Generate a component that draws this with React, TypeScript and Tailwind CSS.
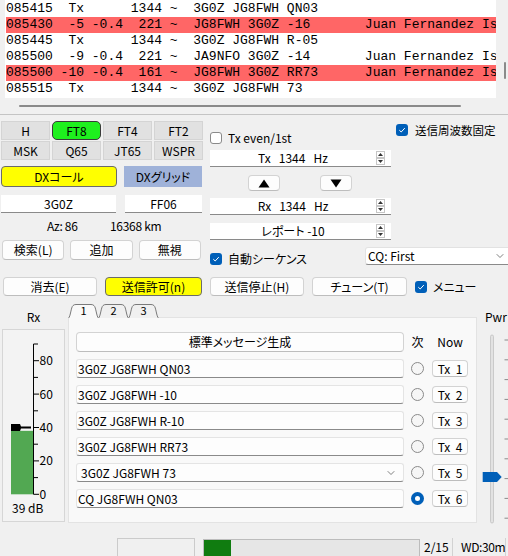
import type { ReactNode } from 'react'
import { ChevronDown } from 'lucide-react'

const decodes = [
  { text: '085415  Tx      1344 ~  3G0Z JG8FWH QN03', hit: false },
  { text: '085430  -5 -0.4  221 ~  JG8FWH 3G0Z -16       Juan Fernandez Is.', hit: true },
  { text: '085445  Tx      1344 ~  3G0Z JG8FWH R-05', hit: false },
  { text: '085500  -9 -0.4  221 ~  JA9NFO 3G0Z -14       Juan Fernandez Is.', hit: false },
  { text: '085500 -10 -0.4  161 ~  JG8FWH 3G0Z RR73      Juan Fernandez Is.', hit: true },
  { text: '085515  Tx      1344 ~  3G0Z JG8FWH 73', hit: false },
]

const modes = ['H', 'FT8', 'FT4', 'FT2', 'MSK', 'Q65', 'JT65', 'WSPR']

const txMsgs = [
  '3G0Z JG8FWH QN03',
  '3G0Z JG8FWH -10',
  '3G0Z JG8FWH R-10',
  '3G0Z JG8FWH RR73',
  '3G0Z JG8FWH 73',
  'CQ JG8FWH QN03',
]

function Btn({ children, className = '' }: { children: ReactNode; className?: string }) {
  return (
    <div
      className={`flex items-center justify-center rounded-[4px] border border-[#d3d3d3] border-b-[#bdbdbd] bg-[#fdfdfd] ${className}`}
    >
      {children}
    </div>
  )
}

function Check({ on }: { on?: boolean }) {
  if (on) {
    return (
      <span className="flex h-[12px] w-[12px] shrink-0 items-center justify-center rounded-[3px] bg-[#005fb8]">
        <svg width="8" height="8" viewBox="0 0 8 8">
          <path d="M1.3 4.2 L3.2 6 L6.8 2.1" stroke="#fff" strokeWidth="1" fill="none" />
        </svg>
      </span>
    )
  }
  return <span className="block h-[12px] w-[12px] shrink-0 rounded-[3px] border border-[#8a8a8a] bg-white" />
}

function Radio({ on }: { on?: boolean }) {
  if (on) {
    return (
      <span className="flex h-[13px] w-[13px] shrink-0 items-center justify-center rounded-full bg-[#005fb8]">
        <span className="block h-[5px] w-[5px] rounded-full bg-white" />
      </span>
    )
  }
  return <span className="block h-[13px] w-[13px] shrink-0 rounded-full border border-[#8a8a8a] bg-[#f6f6f6]" />
}

function SpinArrows() {
  return (
    <svg width="9" height="14" viewBox="0 0 9 14" className="shrink-0">
      <rect x="0.5" y="0.5" width="8" height="6" fill="#fff" stroke="#c6c6c6" />
      <rect x="0.5" y="7.5" width="8" height="6" fill="#fff" stroke="#c6c6c6" />
      <path d="M2 5 L4.5 2 L7 5Z" fill="#333" />
      <path d="M2 9 L4.5 12 L7 9Z" fill="#333" />
    </svg>
  )
}

function Spin({ children }: { children: ReactNode }) {
  return (
    <div className="flex h-[17px] w-[181px] items-center border-b border-[#8a8a8a] bg-white pr-[6px]">
      <div className="flex-1 whitespace-pre text-center">{children}</div>
      <SpinArrows />
    </div>
  )
}

// vertical signal meter, 0..90 dB
function RxMeter() {
  const y = (db: number) => 164.3 - db * 1.67
  const ticks = [0, 10, 20, 30, 40, 50, 60, 70, 80, 90]
  return (
    <svg width="61" height="191" className="block">
      <rect x={8} y={y(38)} width={22.3} height={y(0) - y(38)} fill="#52a852" />
      <path d={`M8 ${y(40) - 3.5} L17 ${y(40) - 3.5} L18 ${y(40) - 1} L28 ${y(40) - 1} L28 ${y(40) + 1} L18 ${y(40) + 1} L17 ${y(40) + 3.5} L8 ${y(40) + 3.5}Z`} fill="#000" />
      <line x1={30.5} y1={y(90)} x2={30.5} y2={y(0)} stroke="#000" strokeWidth="1" />
      {ticks.map((t) => (
        <line key={t} x1={30.5} y1={y(t)} x2={t % 20 === 0 ? 36 : 35} y2={y(t)} stroke="#000" strokeWidth="1" />
      ))}
      {[0, 20, 40, 60, 80].map((t) => (
        <text key={t} x={36.5} y={y(t) + 4.5} fontSize="12" fill="#000" fontFamily="Noto Sans CJK JP, sans-serif">
          {t}
        </text>
      ))}
      <text x={9} y={183} fontSize="12" fill="#000" fontFamily="Noto Sans CJK JP, sans-serif">
        39 dB
      </text>
    </svg>
  )
}

function PwrSlider() {
  const ticks = Array.from({ length: 10 }, (_, i) => 10 + i * 19.8)
  return (
    <svg width="31" height="200" className="block">
      <rect x={13.5} y={5} width={3} height={188} rx={1.5} fill="#e2e2e2" stroke="#c2c2c2" strokeWidth="0.8" />
      {ticks.map((t) => (
        <line key={t} x1={27.5} y1={t} x2={31} y2={t} stroke="#8a8a8a" strokeWidth="1" />
      ))}
      <path d="M5.7 142 L20 142 L24.7 147 L20 152 L5.7 152Z" fill="#005fb8" />
    </svg>
  )
}

function Tab({ label, active }: { label: string; active?: boolean }) {
  return (
    <div className="relative -mr-[1px] flex h-[14px] w-[31px] items-center justify-center text-[11px]">
      <svg width="31" height="14" className="absolute inset-0">
        <path
          d="M0.5 14 C2.5 13 3 3 5 1.6 Q6 0.5 8 0.5 L23 0.5 Q25 0.5 26 1.6 C28 3 28.5 13 30.5 14"
          fill={active ? '#f9f9f9' : '#f0f0f0'}
          stroke="#7a7a7a"
          strokeWidth="1"
        />
      </svg>
      <span className="relative -mt-[2px]">{label}</span>
    </div>
  )
}

export default function App() {
  return (
    <div className="h-[556px] w-[508px] overflow-hidden bg-[#f0f0f0] font-['Noto_Sans_CJK_JP',sans-serif] text-[12px] leading-[16px] text-black [font-feature-settings:'palt']">
      {/* band activity */}
      <div className="flex h-[98px]">
        <div className="ml-[5px] w-[491px] overflow-hidden bg-white pl-[1px] pt-[1px] font-['Liberation_Mono','Courier_New',monospace] text-[13px] leading-[16px] [font-feature-settings:normal]">
          {decodes.map((d, i) => (
            <div key={i} className={`h-[16px] whitespace-pre ${d.hit ? 'bg-[#ff6666]' : ''}`}>
              {d.text}
            </div>
          ))}
        </div>
        <div className="flex-1">
          <div className="ml-[8px] mt-[62px] h-[17px] w-[2px] rounded-full bg-[#8a8a8a]" />
        </div>
      </div>
      <div className="h-[16px] pt-[7px]">
        <div className="ml-[19px] h-[2px] w-[442px] rounded-full bg-[#8a8a8a]" />
      </div>
      <div className="h-px bg-[#c4c4c4]" />

      {/* mode + dx panel, frequency controls */}
      <div className="flex h-[162px]">
        <div className="flex w-[203px] flex-col pl-[1px] pt-[6px]">
          <div className="grid w-[202px] grid-cols-4 gap-x-[2px] gap-y-[1px]">
            {modes.map((m) => (
              <div
                key={m}
                className={
                  m === 'FT8'
                    ? 'flex h-[19px] items-center justify-center rounded-[5px] border border-[#3a3a3a] bg-[#1ef01e]'
                    : 'flex h-[19px] items-center justify-center border border-[#d4d4d4] bg-[#e1e1e1]'
                }
              >
                {m}
              </div>
            ))}
          </div>
          <div className="mt-[6px] flex h-[21px] gap-[7px]">
            <div className="flex w-[116px] items-center justify-center rounded-[4px] border border-[#6b6b6b] bg-[#ffff00]">
              DXコール
            </div>
            <div className="flex w-[78px] items-center justify-center bg-[#9fb2d9]">DXグリッド</div>
          </div>
          <div className="mt-[8px] flex h-[18px] gap-[9px]">
            <div className="flex w-[115px] items-center justify-center border-b border-[#8a8a8a] bg-white">3G0Z</div>
            <div className="flex w-[77px] items-center justify-center border-b border-[#8a8a8a] bg-white">FF06</div>
          </div>
          <div className="flex h-[26px] items-center tracking-[-0.3px]">
            <span className="ml-[46px] w-[63px]">Az: 86</span>
            <span>16368 km</span>
          </div>
          <div className="mt-px grid h-[20px] w-[200px] grid-cols-3 gap-[6px] pl-[1px]">
            <Btn>検索(L)</Btn>
            <Btn>追加</Btn>
            <Btn>無視</Btn>
          </div>
        </div>

        <div className="ml-[7px] flex flex-1 flex-col">
          <div className="flex h-[35px]">
            <div className="mt-[17px] flex h-[12px] w-[186px] items-center gap-[6px]">
              <Check />
              <span>Tx even/1st</span>
            </div>
            <div className="mt-[9px] flex h-[12px] items-center gap-[7px]">
              <Check on />
              <span className="text-[11.5px]">送信周波数固定</span>
            </div>
          </div>
          <Spin>Tx   1344   Hz</Spin>
          <div className="mt-[8px] flex h-[16px]">
            <Btn className="ml-[38px] w-[32px]">
              <svg width="12" height="9" viewBox="0 0 12 9">
                <path d="M0.5 8.5 L6 0.5 L11.5 8.5Z" fill="#000" />
              </svg>
            </Btn>
            <Btn className="ml-[40px] w-[32px]">
              <svg width="12" height="9" viewBox="0 0 12 9">
                <path d="M0.5 0.5 L6 8.5 L11.5 0.5Z" fill="#000" />
              </svg>
            </Btn>
          </div>
          <div className="mt-[7px]">
            <Spin>Rx   1344   Hz</Spin>
          </div>
          <div className="mt-[8px]">
            <Spin>レポート -10</Spin>
          </div>
          <div className="mt-[7px] flex h-[18px]">
            <div className="mt-[6px] flex h-[12px] w-[155px] items-center gap-[6px]">
              <Check on />
              <span>自動シーケンス</span>
            </div>
            <div className="flex w-[150px] items-center justify-between rounded-[3px] border border-[#e2e2e2] border-b-[#8a8a8a] bg-white pl-[2px] pr-[8px]">
              <span>CQ: First</span>
              <ChevronDown size={12} strokeWidth={1.5} color="#555" />
            </div>
          </div>
        </div>
      </div>

      {/* transmit buttons */}
      <div className="flex h-[19px] items-stretch gap-[8px] pl-[3px]">
        <Btn className="w-[94px]">消去(E)</Btn>
        <div className="flex w-[97px] items-center justify-center rounded-[4px] border border-[#6b6b6b] bg-[#ffff00]">
          送信許可(n)
        </div>
        <Btn className="w-[94px]">送信停止(H)</Btn>
        <Btn className="w-[95px]">チューン(T)</Btn>
        <div className="flex items-center gap-[6px]">
          <Check on />
          <span>メニュー</span>
        </div>
      </div>

      {/* meter, tx messages, power */}
      <div className="flex h-[242px]">
        <div className="ml-[2px] flex w-[63px] flex-col">
          <div className="h-[33px] pt-[13px] text-center">Rx</div>
          <div className="h-[193px] border border-[#d6d6d6] bg-[#f3f3f3]">
            <RxMeter />
          </div>
        </div>

        <div className="ml-[3px] flex w-[409px] flex-col pt-[8px]">
          <div className="relative z-10 flex h-[14px]">
            <Tab label="1" active />
            <Tab label="2" />
            <Tab label="3" />
          </div>
          <div className="-mt-px flex h-[206px] flex-col border border-[#e3e3e3] bg-[#f9f9f9] pl-[7px] pr-[8px] pt-[14px]">
            <div className="flex h-[20px] items-center">
              <Btn className="h-[20px] w-[328px]">標準メッセージ生成</Btn>
              <span className="ml-[7px] w-[13px] text-center">次</span>
              <span className="ml-[8px] w-[36px] text-center">Now</span>
            </div>
            <div className="mt-[7px] flex flex-col gap-[7px]">
              {txMsgs.map((m, i) => (
                <div key={m} className="flex h-[19px] items-center">
                  <div
                    className={`flex h-[19px] w-[328px] items-center justify-between rounded-[3px] border border-[#e4e4e4] border-b-[#8a8a8a] bg-[#fdfdfd] ${i === 4 ? 'pl-[4px] pr-[6px]' : 'pl-[1px]'}`}
                  >
                    <span>{m}</span>
                    {i === 4 && <ChevronDown size={12} strokeWidth={1.5} color="#555" />}
                  </div>
                  <span className="ml-[7px] flex">
                    <Radio on={i === 5} />
                  </span>
                  <Btn className="ml-[8px] h-[17px] w-[36px] whitespace-pre">{`Tx  ${i + 1}`}</Btn>
                </div>
              ))}
            </div>
          </div>
        </div>

        <div className="flex flex-1 flex-col">
          <div className="h-[34px] pl-[8px] pt-[13px]">Pwr</div>
          <PwrSlider />
        </div>
      </div>

      {/* status bar */}
      <div className="flex h-[18px]">
        <div className="ml-[117px] w-[78px] border border-b-0 border-[#cbcbcb]" />
        <div className="ml-[8px] mt-px flex w-[217px] border border-b-0 border-[#bcbcbc] bg-[#e6e6e6]">
          <div className="w-[27px] bg-[#107c10]" />
        </div>
        <span className="ml-[4px] flex w-[28px] items-center">2/15</span>
        <div className="w-px bg-[#d2d2d2]" />
        <span className="ml-[8px] flex w-[44px] items-center tracking-[-0.4px]">WD:30m</span>
        <div className="w-px bg-[#d2d2d2]" />
      </div>
    </div>
  )
}
